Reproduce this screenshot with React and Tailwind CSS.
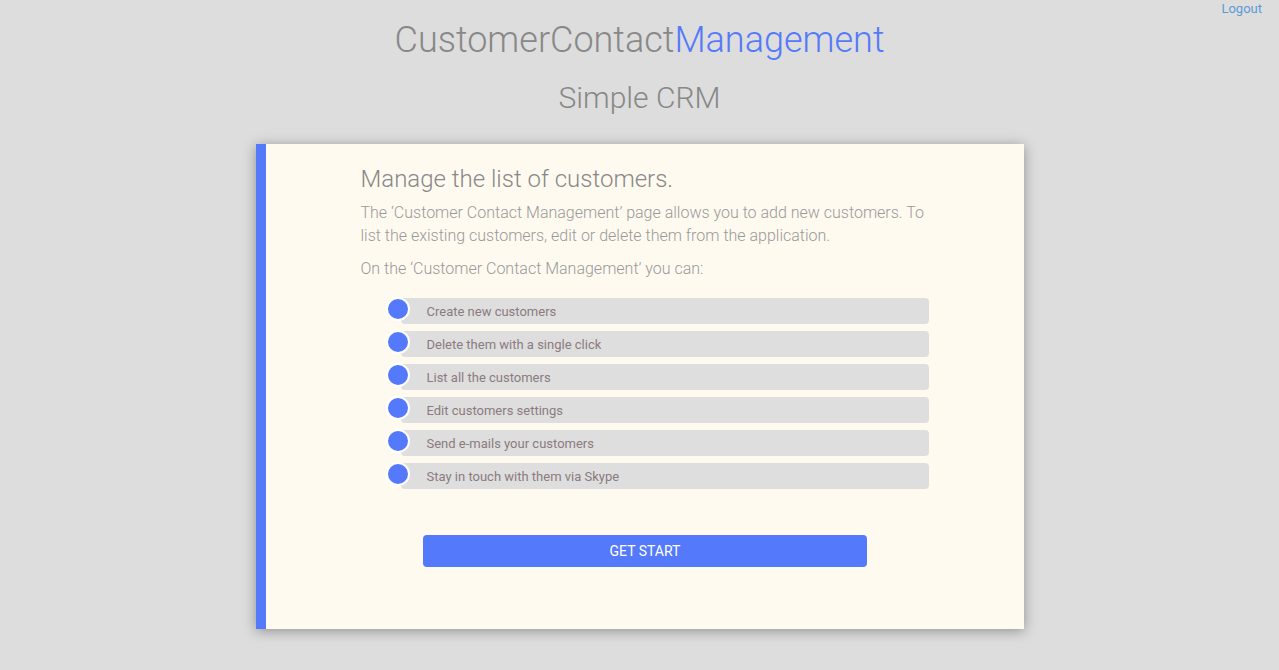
const features = [
  'Create new customers',
  'Delete them with a single click',
  'List all the customers',
  'Edit customers settings',
  'Send e-mails your customers',
  'Stay in touch with them via Skype',
];

function FeatureItem({ label }) {
  return (
    <li className="relative h-[26px] pl-[15px]">
      <div className="h-[26px] rounded-[4px] rounded-tl-none bg-[#dedede] pl-[26px] text-[13px] font-normal leading-[28px] text-[#8b7b80]">
        {label}
      </div>
      <span className="absolute left-0 top-[-1px] h-[24px] w-[24px] rounded-full border-2 border-white bg-[#5479fa]" />
    </li>
  );
}

export default function App() {
  return (
    <div className="relative min-h-[670px] bg-[#dddddd] font-['Roboto',sans-serif] font-light text-[#888888]">
      <a href="#" className="absolute right-[17px] top-[-1px] text-[13px] font-normal text-[#5b9bd5]">
        Logout
      </a>
      <header className="pt-[17px] text-center">
        <h1 className="text-[36px] leading-[46px]">
          CustomerContact<span className="text-[#5479fa]">Management</span>
        </h1>
        <h2 className="mt-[17px] text-[30px] leading-[36px]">Simple CRM</h2>
      </header>

      <section className="mx-auto mt-[28px] flex h-[485px] w-[768px] bg-[#fffaf0] shadow-[0_2px_12px_rgba(0,0,0,0.35)]">
        <div className="w-[10px] bg-[#5479fa]" />
        <div className="flex-1 pl-[95px] pr-[95px] pt-[20px]">
          <h3 className="text-[24px] leading-[30px]">Manage the list of customers.</h3>
          <p className="mt-[7px] text-[16px] leading-[23px] text-[#999999]">
            The ‘Customer Contact Management’ page allows you to add new customers. To list the existing
            customers, edit or delete them from the application.
          </p>
          <p className="mt-[10px] text-[16px] leading-[23px] text-[#999999]">
            On the ‘Customer Contact Management’ you can:
          </p>
          <ul className="ml-[25px] mt-[18px] flex flex-col gap-[7px]">
            {features.map((f) => (
              <FeatureItem key={f} label={f} />
            ))}
          </ul>
          <div className="mt-[46px] flex justify-center pl-[1px]">
            <button className="h-[32px] w-[444px] rounded-[4px] bg-[#5479fa] text-[14px] font-normal uppercase text-white">
              Get start
            </button>
          </div>
        </div>
      </section>
    </div>
  );
}
